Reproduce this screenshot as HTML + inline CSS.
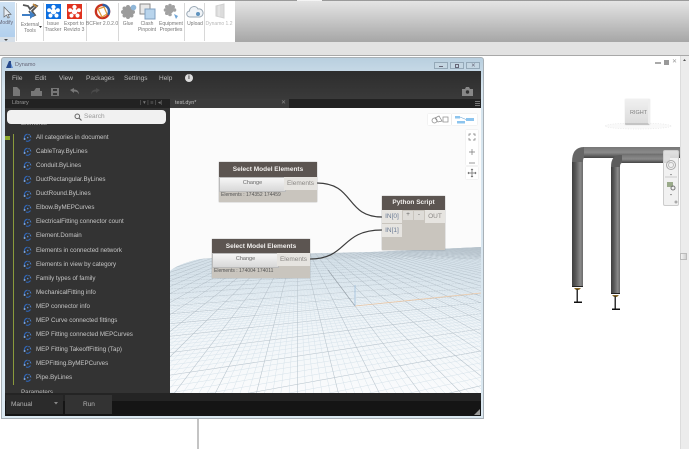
<!DOCTYPE html>
<html><head><meta charset="utf-8">
<style>
html,body{margin:0;padding:0;width:689px;height:449px;overflow:hidden;background:#fff}
#p{position:absolute;left:0;top:0;width:689px;height:449px;overflow:hidden;font-family:"Liberation Sans",sans-serif;filter:blur(.3px)}
.a,.a *{box-sizing:border-box}
.a{position:absolute}
.t{position:absolute;white-space:nowrap}
.rl{position:absolute;font-size:5px;color:#777;text-align:center;line-height:6px;transform:translateX(-50%);white-space:nowrap}
.sep{position:absolute;top:3px;height:38px;width:1px;background:#d8d8d8}
.m{position:absolute;top:74px;font-size:6.500px;line-height:9px;color:#bdbdbd}
#list{position:absolute;left:23px;top:130.500px;font-size:6.200px;color:#c6c6c6}
#list div{position:relative;height:14.150px;line-height:14.150px;padding-left:13px;white-space:nowrap}
#list svg{position:absolute;left:0;top:2.500px}
.hd{position:absolute;background:#5c5551;color:#f2f0ee;font-weight:bold;font-size:6.500px;text-align:center}
.node{position:absolute;background:#c9c5be;box-shadow:0 0 1px #888}
.port{position:absolute;background:#e6e4e0;color:#8a8784;font-size:6.500px;text-align:center}
.btn{position:absolute;background:linear-gradient(#f6f6f6,#d8d8d8);color:#666;font-size:5.500px;text-align:center;border:1px solid #bbb}
</style></head><body>
<div id="p">
<svg width="0" height="0" style="position:absolute"><defs>
<symbol id="li" viewBox="0 0 9 9"><g fill="none" stroke-width="1.100"><path d="M2 6.500A3.400 3.400 0 0 1 4.600 1.200" stroke="#2f66b8"/><path d="M5.500 1.500A3.400 3.400 0 0 1 7.800 5" stroke="#4d86d6" stroke-dasharray="1.200 .8"/><path d="M7.500 6.500A3.400 3.400 0 0 1 3 7.900" stroke="#2f66b8"/></g><circle cx="1.600" cy="6" r="1" fill="#7fa7e0"/><circle cx="4.700" cy="4.600" r=".8" fill="#4d86d6"/></symbol>
<symbol id="fl" viewBox="0 0 16 16"><g fill="#fff"><circle cx="8" cy="3.200" r="2.300"/><circle cx="3.300" cy="6.600" r="2.100"/><circle cx="12.700" cy="6.600" r="2.100"/><circle cx="4.800" cy="12.300" r="2.200"/><circle cx="11.200" cy="12.300" r="2.200"/><circle cx="8" cy="8" r="3"/></g></symbol>
</defs></svg>

<!-- ribbon -->
<div class="a" style="left:0;top:0;width:689px;height:1px;background:#9a9a9a"></div>
<div class="a" style="left:297px;top:0;width:25px;height:1px;background:#f4f4f4"></div>
<div class="a" style="left:235px;top:1px;width:454px;height:41px;background:linear-gradient(#e4e4e4,#a6a6a6)"></div>
<div class="a" style="left:0;top:1px;width:235px;height:41px;background:#fff"></div>
<div class="a" style="left:0;top:42px;width:689px;height:13px;background:#e2e2e2"></div>
<div class="a" style="left:0;top:55px;width:689px;height:1px;background:#a8a8a8"></div>
<div class="a" style="left:0;top:2px;width:15px;height:39px;background:linear-gradient(#cfe2f4,#aecdec)"></div>
<div class="a" style="left:0;top:37px;width:15px;height:5px;background:#d6dfe8"></div>
<svg class="a" style="left:0;top:2px" width="16" height="40"><path d="M4 5v10l2.500-2 1.500 3 1.300-.6-1.400-3H11z" fill="#e8eef4" stroke="#666" stroke-width=".7"/><path d="M4 37h4l-2 2z" fill="#444"/></svg>
<div class="t" style="left:0;top:20px;font-size:5px;color:#667;width:13px;overflow:hidden;direction:rtl">Modify</div>

<div class="sep" style="left:16px"></div><div class="sep" style="left:43px"></div><div class="sep" style="left:86px"></div><div class="sep" style="left:118px"></div><div class="sep" style="left:184px"></div><div class="sep" style="left:204px"></div>

<svg class="a" style="left:21px;top:3px" width="18" height="17"><path d="M2 2l5 1 2 3 5-4 2 1-5 5 3 4-2 1-4-5" fill="none" stroke="#555" stroke-width="1.800"/><path d="M1 11h8V8l5 4-5 4v-3H1z" fill="#3f7fc6"/><path d="M12 1l4 3" stroke="#c68a3c" stroke-width="1.500"/></svg>
<div class="rl" style="left:30px;top:22px">External<br>Tools</div>
<svg class="a" style="left:39px;top:26px" width="4" height="4"><path d="M0 0h3l-1.500 2z" fill="#333"/></svg>

<div class="a" style="left:46px;top:4px;width:15px;height:15px;background:#0d6fe0"><svg width="15" height="15" style="display:block"><use href="#fl"/></svg></div>
<div class="rl" style="left:53px;top:21px">Issue<br>Tracker</div>
<div class="a" style="left:67px;top:4px;width:15px;height:15px;background:#e0321e"><svg width="15" height="15" style="display:block"><use href="#fl"/></svg></div>
<div class="rl" style="left:74px;top:21px">Export to<br>Revizto 3</div>

<svg class="a" style="left:94px;top:3px" width="17" height="17"><circle cx="8.500" cy="8.500" r="6.600" fill="none" stroke="#c8321e" stroke-width="2.400"/><path d="M8.500 1.900A6.600 6.600 0 0 1 14 12" fill="none" stroke="#2c5fa8" stroke-width="2.400"/><path d="M4 6l6-2 3 7-5 3z" fill="none" stroke="#e09a3a" stroke-width="1.200"/></svg>
<div class="rl" style="left:102px;top:21px">BCFier 2.0.2.0</div>

<svg class="a" style="left:120px;top:4px" width="18" height="17"><g fill="#9b9b9b"><circle cx="8" cy="8" r="4"/><circle cx="8" cy="3" r="2"/><circle cx="8" cy="13" r="2"/><circle cx="3" cy="8" r="2"/><circle cx="13" cy="8" r="2"/><circle cx="4.500" cy="4.500" r="2"/><circle cx="11.500" cy="4.500" r="2"/><circle cx="4.500" cy="11.500" r="2"/><circle cx="11.500" cy="11.500" r="2"/></g><circle cx="13.500" cy="3.500" r="2.800" fill="#8fb6d8"/></svg>
<div class="rl" style="left:128px;top:21px">Glue</div>
<svg class="a" style="left:139px;top:3px" width="18" height="18"><rect x="1" y="1" width="10" height="10" fill="#e8e8e8" stroke="#8a8a8a"/><rect x="6" y="6" width="10" height="10" fill="#b8d4ec" stroke="#7f9fc0"/></svg>
<div class="rl" style="left:147px;top:21px">Clash<br>Pinpoint</div>
<svg class="a" style="left:162px;top:3px" width="18" height="18"><g fill="#a2a2a2"><circle cx="8" cy="7" r="3.500"/><circle cx="8" cy="2.500" r="1.800"/><circle cx="8" cy="11.500" r="1.800"/><circle cx="3.500" cy="7" r="1.800"/><circle cx="12.500" cy="7" r="1.800"/><circle cx="4.800" cy="3.800" r="1.800"/><circle cx="11.200" cy="3.800" r="1.800"/><circle cx="4.800" cy="10.200" r="1.800"/></g><path d="M12 11l4 2-2 3z" fill="#6fa5d6"/></svg>
<div class="rl" style="left:171px;top:21px">Equipment<br>Properties</div>
<svg class="a" style="left:186px;top:4px" width="18" height="15"><path d="M4 13a3 3 0 0 1-.500-6 4.500 4.500 0 0 1 8.500-2 3.500 3.500 0 0 1 2 8z" fill="#f0f4f8" stroke="#9aa8b4"/><circle cx="12" cy="10" r="2" fill="#5f93bf"/></svg>
<div class="rl" style="left:195px;top:21px">Upload</div>
<svg class="a" style="left:213px;top:3px" width="14" height="17"><path d="M3 3l8-2v14l-8-2z" fill="#dcdcdc" stroke="#d0d0d0"/><path d="M6 2.500v11" stroke="#ececec"/></svg>
<div class="rl" style="left:219px;top:21px;color:#b8b8b8">Dynamo 1.2</div>

<!-- revit view -->
<div class="a" style="left:680px;top:56px;width:9px;height:393px;background:#ececec;border-left:1px solid #dcdcdc"></div>
<div class="a" style="left:680px;top:253px;width:7px;height:7px;background:linear-gradient(90deg,#f4f4f4,#d0d0d0);border:1px solid #bbb"></div>
<svg class="a" style="left:680px;top:56px" width="9" height="8"><path d="M3 5h3l-1.500-2z" fill="#555"/></svg>
<div class="a" style="left:655px;top:62px;width:6px;height:2px;background:#aaa"></div>
<div class="a" style="left:664px;top:60px;width:5px;height:5px;background:#999"></div>
<div class="t" style="left:672px;top:59px;font-size:6px;line-height:6px;color:#999">✕</div>

<svg class="a" style="left:600px;top:95px" width="80" height="40"><ellipse cx="38" cy="31" rx="33" ry="3" fill="#f9f9f9" stroke="#e6e6e6" stroke-width=".7" stroke-dasharray="1 1.500"/></svg>
<div class="a" style="left:625px;top:99px;width:25px;height:26px;background:linear-gradient(#f0f0f0,#dcdcdc);border-right:2px solid #eee;border-bottom:2px solid #c4c4c4;border-radius:1px;box-shadow:0 0 1px #ccc"></div>
<div class="t" style="left:630px;top:110px;font-size:5.500px;color:#808080">RIGHT</div>

<svg class="a" style="left:560px;top:140px" width="125" height="180">
<defs>
<linearGradient id="v" x1="0" x2="1" y1="0" y2="0"><stop offset="0" stop-color="#3e3e3e"/><stop offset=".35" stop-color="#5a5a5a"/><stop offset=".75" stop-color="#8a8a8a"/><stop offset="1" stop-color="#6a6a6a"/></linearGradient>
<linearGradient id="h" x1="0" x2="0" y1="0" y2="1"><stop offset="0" stop-color="#777"/><stop offset=".5" stop-color="#8a8a8a"/><stop offset="1" stop-color="#444"/></linearGradient>
</defs>
<rect x="24" y="7" width="96" height="11" fill="url(#h)"/>
<path d="M12 22Q12 7 24 7V18Q23 18 23 22Z" fill="#666"/>
<rect x="12" y="22" width="11" height="125" fill="url(#v)"/>
<rect x="12" y="146" width="11" height="1" fill="#222"/>
<rect x="60" y="15" width="50" height="8" fill="url(#h)"/>
<path d="M51 27Q51 15 60 15H62V23Q60 23 60 27Z" fill="#5c5c5c"/>
<rect x="51" y="27" width="9" height="127" fill="url(#v)"/>
<rect x="51" y="153" width="9" height="1" fill="#222"/>
<path d="M14 148h7l-2 2h-3z" fill="#8a6a2a"/><rect x="16.500" y="149" width="1.500" height="13" fill="#333"/><rect x="14" y="161.500" width="8" height="1.500" fill="#111"/>
<path d="M52 155h7l-2 2h-3z" fill="#8a6a2a"/><rect x="54.500" y="156" width="1.500" height="13" fill="#333"/><rect x="52" y="168.500" width="8" height="1.500" fill="#111"/>
</svg>
<div class="a" style="left:663px;top:150px;width:16px;height:56px;background:rgba(238,238,238,.85);border:1px solid #ccc;border-radius:2px"></div>
<svg class="a" style="left:663px;top:150px" width="16" height="56"><circle cx="8" cy="15" r="4.500" fill="none" stroke="#aaa"/><circle cx="8" cy="15" r="2.500" fill="none" stroke="#bbb"/><path d="M2 27h12" stroke="#ccc"/><path d="M7 24h2l-1 1.500z" fill="#777"/><rect x="4" y="32" width="6" height="5" fill="#9aaa8a"/><circle cx="10" cy="38" r="2" fill="none" stroke="#777"/><path d="M7 44h2l-1 1.500z" fill="#777"/><circle cx="13" cy="52" r="1.500" fill="#aaa"/></svg>

<div class="a" style="left:197px;top:419px;width:2px;height:30px;background:#c4c4c4"></div>

<!-- Dynamo window -->
<div class="a" style="left:1px;top:57px;width:483px;height:362px;background:linear-gradient(#b9cfdf,#d6e5ef 30px,#dbe8f1);border:1px solid #a8b0b6;border-radius:3px 3px 0 0"></div>
<svg class="a" style="left:5px;top:60px" width="9" height="9"><path d="M1 8L4 1h2v7z" fill="#274a8c"/><path d="M6 3l2 5H6z" fill="#5a8ad0"/></svg>
<div class="t" style="left:15px;top:62px;font-size:5.500px;color:#667">Dynamo</div>
<div class="a" style="left:434px;top:62px;width:14px;height:7px;border:1px solid #95a9b8;background:#c4d6e2"></div>
<div class="a" style="left:450px;top:62px;width:14px;height:7px;border:1px solid #95a9b8;background:#c4d6e2"></div>
<div class="a" style="left:466px;top:62px;width:14px;height:7px;border:1px solid #95a9b8;background:#c4d6e2"></div>
<div class="a" style="left:439px;top:65.500px;width:4px;height:1px;background:#667"></div>
<div class="a" style="left:455px;top:64px;width:4px;height:3.500px;border:1px solid #667"></div>
<div class="t" style="left:471px;top:62.500px;font-size:5.500px;line-height:6px;color:#667">✕</div>

<div class="a" style="left:5px;top:71px;width:476px;height:345px;background:#333"></div>
<div class="a" style="left:5px;top:71px;width:476px;height:28px;background:linear-gradient(#2d2d2d,#3a3a3a)"></div>
<div class="m" style="left:12px">File</div><div class="m" style="left:35px">Edit</div><div class="m" style="left:59px">View</div><div class="m" style="left:86px">Packages</div><div class="m" style="left:124px">Settings</div><div class="m" style="left:159px">Help</div>
<div class="a" style="left:185px;top:74px;width:8px;height:8px;border-radius:50%;background:#ddd;color:#333;font:bold 6px/8px 'Liberation Sans',sans-serif;text-align:center">i</div>

<svg class="a" style="left:10px;top:86px" width="100" height="11"><path d="M3 1h4l3 3v6H3z" fill="#777"/><path d="M21 5h3l2-3h4v3h2v5H21z" fill="#777"/><path d="M41 2h8v8h-8z M43 3v2h4V3z M43 7v2h4V7z" fill="#777" fill-rule="evenodd"/><path d="M60 4l4-2v1.500c4 0 5 3 5 5-1-2-2-3-5-3V7z" fill="#777"/><path d="M90 4l-4-2v1.500c-4 0-5 3-5 5 1-2 2-3 5-3V7z" fill="#4a4a4a"/></svg>
<svg class="a" style="left:462px;top:87px" width="11" height="9"><path d="M0 2h3l1-2h3l1 2h3v7H0z" fill="#888"/><circle cx="5.500" cy="5" r="1.700" fill="#333"/></svg>

<div class="a" style="left:5px;top:99px;width:476px;height:9px;background:#222"></div>
<div class="t" style="left:12px;top:100px;font-size:5.500px;color:#999">Library</div>
<div class="t" style="left:140px;top:100px;font-size:5.500px;color:#777">| ▾ | ≡ | ◂|</div>
<div class="a" style="left:170px;top:99px;width:119px;height:9px;background:#3c3c3c"></div>
<div class="t" style="left:175px;top:100px;font-size:5.500px;color:#c0c0c0">test.dyn*</div>
<div class="t" style="left:281px;top:100px;font-size:6px;line-height:7px;color:#888">✕</div>
<div class="a" style="left:475px;top:101px;width:5px;height:5px;border-top:1px solid #777;border-bottom:1px solid #777"></div>
<div class="a" style="left:475px;top:103px;width:5px;height:1px;background:#777"></div>

<!-- library -->
<div class="t" style="left:21px;top:120px;font-size:6.200px;color:#bbb">Elements</div>
<div class="t" style="left:21px;top:389px;font-size:6.200px;color:#bbb">Parameters</div>
<div class="a" style="left:7px;top:110px;width:159px;height:14px;background:#f1f1f1;border-radius:4px;z-index:2"></div>
<svg class="a" style="left:74px;top:113px;z-index:3" width="8" height="8"><circle cx="3.300" cy="3.300" r="2.300" fill="none" stroke="#666" stroke-width="1"/><path d="M5 5l2.500 2.500" stroke="#666" stroke-width="1.200"/></svg>
<div class="t" style="left:84px;top:113px;font-size:6.500px;color:#999;z-index:3">Search</div>
<div class="a" style="left:13px;top:134px;width:1px;height:251px;background:#8a9a3c"></div>
<div class="a" style="left:5px;top:136px;width:5px;height:4px;background:#8faa2e"></div>
<div id="list">
<div><svg width="9" height="9"><use href="#li"/></svg>All categories in document</div>
<div><svg width="9" height="9"><use href="#li"/></svg>CableTray.ByLines</div>
<div><svg width="9" height="9"><use href="#li"/></svg>Conduit.ByLines</div>
<div><svg width="9" height="9"><use href="#li"/></svg>DuctRectangular.ByLines</div>
<div><svg width="9" height="9"><use href="#li"/></svg>DuctRound.ByLines</div>
<div><svg width="9" height="9"><use href="#li"/></svg>Elbow.ByMEPCurves</div>
<div><svg width="9" height="9"><use href="#li"/></svg>ElectricalFitting connector count</div>
<div><svg width="9" height="9"><use href="#li"/></svg>Element.Domain</div>
<div><svg width="9" height="9"><use href="#li"/></svg>Elements in connected network</div>
<div><svg width="9" height="9"><use href="#li"/></svg>Elements in view by category</div>
<div><svg width="9" height="9"><use href="#li"/></svg>Family types of family</div>
<div><svg width="9" height="9"><use href="#li"/></svg>MechanicalFitting info</div>
<div><svg width="9" height="9"><use href="#li"/></svg>MEP connector info</div>
<div><svg width="9" height="9"><use href="#li"/></svg>MEP Curve connected fittings</div>
<div><svg width="9" height="9"><use href="#li"/></svg>MEP Fitting connected MEPCurves</div>
<div><svg width="9" height="9"><use href="#li"/></svg>MEP Fitting TakeoffFitting (Tap)</div>
<div><svg width="9" height="9"><use href="#li"/></svg>MEPFitting.ByMEPCurves</div>
<div><svg width="9" height="9"><use href="#li"/></svg>Pipe.ByLines</div>
</div>

<!-- canvas -->
<div class="a" style="left:170px;top:108px;width:311px;height:285px;background:#fbfbfb;overflow:hidden">
<svg id="g" width="311" height="285" style="position:absolute;left:0;top:0">
<defs><linearGradient id="fl2" x1="0" x2="0" y1="0" y2="1"><stop offset="0" stop-color="#dde9f1"/><stop offset=".45" stop-color="#edf3f7"/><stop offset="1" stop-color="#fafbfc"/></linearGradient>
<clipPath id="cp"><path d="M0 163Q8 156 30 151Q90 146 200 144Q270 141 311 139V285H0z"/></clipPath></defs>
<g clip-path="url(#cp)"><rect x="0" y="135" width="311" height="150" fill="url(#fl2)"/><g id="gl" fill="none"></g>
<path d="M158 162L185 198" stroke="#9aa4ac" stroke-width=".7"/><path d="M185 198L311 185" stroke="#ecc9a8" stroke-width=".8"/><path d="M185 198V177" stroke="#9fbfdc" stroke-width=".8"/></g>
</svg>
</div>
<script>
(function(){var V=[977,122],W=[128,122],O=[185,198],g=.0045,h=.022,s='';
function P(u,v){var w=1+g*u+h*v;return [(g*V[0]*u+h*W[0]*v+O[0])/w,(g*V[1]*u+h*W[1]*v+O[1])/w]}
function L(a,b,m){var dx=b[0]-a[0],t0=0,t1=1;
if(Math.abs(dx)<1e-6){if(a[0]<-2||a[0]>313)return}
else{var p=(-2-a[0])/dx,q=(313-a[0])/dx,r;if(p>q){r=p;p=q;q=r}t0=Math.max(0,p);t1=Math.min(1,q);if(t0>=t1)return}
function f(t){return (a[0]+dx*t).toFixed(1)+' '+(a[1]+(b[1]-a[1])*t).toFixed(1)}
s+='<path d="M'+f(t0)+'L'+f(t1)+'" stroke="'+(m?'#b6c2cb':'#d6e2ea')+'" stroke-width="'+(m?.55:.5)+'"/>'}
var i,m,E;
for(i=-400;i<=600;i++){m=i%5==0;E=m?5:2.6;if(!m&&(i<-200))continue;L(P((-.55-h*i)/g,i),P((E-1-h*i)/g,i),m)}
for(i=-1500;i<=3000;i++){m=i%5==0;E=m?5:2.6;if(!m&&(i<-500||i>800))continue;L(P(i,(-.55-g*i)/h),P(i,(E-1-g*i)/h),m)}
document.getElementById('gl').innerHTML=s})();
</script>

<!-- view toggles -->
<div class="a" style="left:428px;top:114px;width:23px;height:11px;background:#fff;box-shadow:0 0 1px #ccc"></div>
<div class="a" style="left:452px;top:114px;width:25px;height:11px;background:#fff;box-shadow:0 0 1px #ccc"></div>
<svg class="a" style="left:428px;top:114px" width="50" height="11"><circle cx="6.500" cy="6.500" r="2.500" fill="none" stroke="#888" stroke-width=".7"/><path d="M7 4l4-2 3 5-4 1z" fill="none" stroke="#888" stroke-width=".7"/><rect x="15" y="3" width="5" height="5" fill="none" stroke="#888" stroke-width=".7"/><rect x="27" y="2" width="5" height="2.500" fill="#8cc4ee"/><rect x="38" y="4" width="8" height="3" fill="#8cc4ee"/><rect x="29" y="7" width="8" height="2.500" fill="#8cc4ee"/><path d="M32 3l6 2.500" stroke="#5a9ad0" stroke-width=".5"/></svg>
<div class="a" style="left:466px;top:130px;width:12px;height:35px;background:#fff;box-shadow:0 0 1px #ccc"></div>
<div class="a" style="left:466px;top:167px;width:12px;height:12px;background:#fff;box-shadow:0 0 1px #ccc"></div>
<svg class="a" style="left:466px;top:130px" width="12" height="50"><path d="M3 6V4h2M7 4h2v2M3 8v2h2M7 10h2V8M3 22h6M6 19v6M3 33h6" fill="none" stroke="#777" stroke-width=".7"/><path d="M2 43h8M6 39v8M3 42l-1 1 1 1M9 42l1 1-1 1M5 40l1-1 1 1M5 46l1 1 1-1" fill="none" stroke="#666" stroke-width=".7"/></svg>

<!-- wires -->
<svg class="a" style="left:170px;top:108px" width="311" height="285" fill="none" stroke="#3c3c3c" stroke-width="1.200"><path d="M147 75C185 75 175 109 212 109"/><path d="M140 151C178 151 170 122 212 122"/></svg>

<!-- node 1 -->
<div class="node" style="left:219px;top:162px;width:98px;height:40px"></div>
<div class="hd" style="left:219px;top:162px;width:98px;height:15px;line-height:15px">Select Model Elements</div>
<div class="btn" style="left:219px;top:177px;width:65px;height:13px;line-height:11px">Change</div>
<div class="port" style="left:284px;top:177px;width:33px;height:13px;line-height:13px">Elements</div>
<div class="t" style="left:221px;top:192px;font-size:5px;line-height:7px;color:#555">Elements : 174352 174459</div>
<!-- node 2 -->
<div class="node" style="left:212px;top:239px;width:98px;height:39px"></div>
<div class="hd" style="left:212px;top:239px;width:98px;height:15px;line-height:15px">Select Model Elements</div>
<div class="btn" style="left:212px;top:253px;width:65px;height:13px;line-height:11px">Change</div>
<div class="port" style="left:277px;top:253px;width:33px;height:13px;line-height:13px">Elements</div>
<div class="t" style="left:214px;top:268px;font-size:5px;line-height:7px;color:#555">Elements : 174004 174011</div>
<!-- python -->
<div class="node" style="left:382px;top:196px;width:63px;height:54px"></div>
<div class="hd" style="left:382px;top:196px;width:63px;height:14px;line-height:14px">Python Script</div>
<div class="port" style="left:382px;top:210px;width:20px;height:13px;line-height:13px;color:#6a7a94">IN[0]</div>
<div class="port" style="left:382px;top:224px;width:20px;height:13px;line-height:13px;color:#6a7a94">IN[1]</div>
<div class="port" style="left:403px;top:211px;width:10px;height:9px;line-height:8px;background:#dedcd8;color:#666">+</div>
<div class="port" style="left:414px;top:211px;width:10px;height:9px;line-height:8px;background:#dedcd8;color:#666">-</div>
<div class="port" style="left:425px;top:210px;width:20px;height:13px;line-height:13px">OUT</div>

<!-- bottom -->
<div class="a" style="left:5px;top:393px;width:476px;height:23px;background:linear-gradient(#242424 0,#242424 8px,#151515 8px)"></div>
<div class="a" style="left:6px;top:395px;width:57px;height:19px;background:#2b2b2b"></div>
<div class="a" style="left:65px;top:395px;width:47px;height:19px;background:#333"></div>
<div class="t" style="left:11px;top:400px;font-size:6.500px;line-height:9px;color:#b4b4b4">Manual</div>
<svg class="a" style="left:54px;top:402px" width="5" height="4"><path d="M0 0h4L2 2.500z" fill="#888"/></svg>
<div class="t" style="left:83px;top:400px;font-size:6.500px;line-height:9px;color:#b4b4b4">Run</div>
<svg class="a" style="left:474px;top:409px" width="7" height="7"><path d="M6 0v6H0z" fill="#999"/></svg>
</div>
</body></html>
